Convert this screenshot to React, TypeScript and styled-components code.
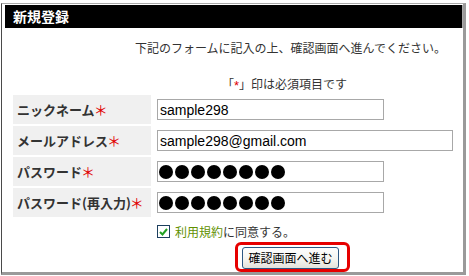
import React from "react";
import styled, { createGlobalStyle } from "styled-components";

const GlobalStyle = createGlobalStyle`
  html, body {
    margin: 0;
    padding: 0;
    background: #fff;
  }
  body {
    font-family: "Noto Sans CJK JP", "Liberation Sans", sans-serif;
    color: #333;
  }
`;

const Frame = styled.div`
  margin: 3px 0 0 1px;
  width: 461px;
  height: 268px;
  border-top: 1px solid #aaa;
  border-left: 1px solid #4a4a4a;
  border-right: 3px solid #9a9a9a;
  border-bottom: 3px solid #9a9a9a;
  overflow: hidden;
`;

const Header = styled.h2`
  margin: 1px 0 0 3px;
  height: 23px;
  line-height: 23px;
  padding-left: 8px;
  background: #000;
  border-right: 1px solid #aaa;
  color: #fff;
  font-size: 14px;
  font-weight: bold;
`;

const Intro = styled.p`
  margin: 12px 0 0;
  padding-right: 17px;
  text-align: right;
  font-size: 12px;
  line-height: 16px;
`;

const Note = styled.p`
  margin: 20px 0 0;
  padding-left: 220px;
  font-size: 12px;
  line-height: 16px;
`;

const NoteMark = styled.span`
  color: #e00000;
  font-family: "Liberation Sans", sans-serif;
  font-size: 13px;
  position: relative;
  top: 1px;
`;

const LabelMark = styled.span`
  color: #e00000;
  font-family: "Noto Sans CJK JP", sans-serif;
  font-size: 14px;
  font-weight: normal;
  margin-left: -1px;
  position: relative;
  top: -1px;
`;

const FormGrid = styled.div`
  margin: 2px 0 0 11px;
  display: grid;
  grid-template-columns: 138px 1fr;
  grid-auto-rows: 29px;
  column-gap: 6px;
  row-gap: 2px;
`;

const Label = styled.div`
  display: flex;
  align-items: center;
  padding-left: 4px;
  background: #f0f0f0;
  font-size: 13px;
  font-weight: bold;
  color: #333;
`;

const Field = styled.div`
  display: flex;
  align-items: center;
`;

const InputBox = styled.div<{ $width: number }>`
  box-sizing: border-box;
  width: ${(p) => p.$width}px;
  height: 21px;
  border: 1px solid #a8a8a8;
  padding-left: 2px;
  display: flex;
  align-items: center;
  font-family: "Liberation Sans", sans-serif;
  font-size: 14px;
  color: #000;
`;

const Dots = styled.div`
  display: flex;
  gap: 2px;
  margin-left: -1px;
`;

const Dot = styled.span`
  width: 14px;
  height: 14px;
  border-radius: 50%;
  background: #000;
`;

const Agree = styled.label`
  margin: 8px 0 0 155px;
  display: flex;
  align-items: center;
  gap: 5px;
  height: 13px;
  font-size: 12px;
  color: #333;
`;

const Check = styled.span`
  box-sizing: border-box;
  width: 13px;
  height: 13px;
  border: 1px solid #1d3f5e;
  background: #fff;
  display: flex;
  align-items: center;
  justify-content: center;
`;

const TermsLink = styled.span`
  color: #5f9000;
`;

const Highlight = styled.div`
  margin: 4px 0 0 233px;
  width: 105px;
  padding: 2px 0 0 4px;
  border: 3px solid #e60000;
  border-radius: 6px;
`;

const Submit = styled.button`
  box-sizing: border-box;
  display: block;
  width: 97px;
  height: 22px;
  padding: 0;
  border: 1px solid #2c5783;
  border-radius: 3px;
  background: linear-gradient(#fefefe, #f3f3ef 60%, #e3e2da);
  font-family: "Noto Sans CJK JP", sans-serif;
  font-size: 12px;
  line-height: 20px;
  color: #000;
`;

const rows = [
  { label: "ニックネーム", width: 227, value: "sample298" },
  { label: "メールアドレス", width: 296, value: "sample298@gmail.com" },
  { label: "パスワード", width: 227, secret: 8 },
  { label: "パスワード(再入力)", width: 227, secret: 8 },
];

export default function App() {
  return (
    <>
      <GlobalStyle />
      <Frame>
        <Header>新規登録</Header>
        <Intro>下記のフォームに記入の上、確認画面へ進んでください。</Intro>
        <Note>
          「<NoteMark>*</NoteMark>」印は必須項目です
        </Note>
        <FormGrid>
          {rows.map((r) => (
            <React.Fragment key={r.label}>
              <Label>
                {r.label}
                <LabelMark>＊</LabelMark>
              </Label>
              <Field>
                <InputBox $width={r.width}>
                  {r.secret ? (
                    <Dots>
                      {Array.from({ length: r.secret }).map((_, i) => (
                        <Dot key={i} />
                      ))}
                    </Dots>
                  ) : (
                    r.value
                  )}
                </InputBox>
              </Field>
            </React.Fragment>
          ))}
        </FormGrid>
        <Agree>
          <Check>
            <svg width="9" height="8" viewBox="0 0 9 8">
              <path d="M1 4 L3.5 6.5 L8 1" fill="none" stroke="#22a022" strokeWidth="2" />
            </svg>
          </Check>
          <span>
            <TermsLink>利用規約</TermsLink>に同意する。
          </span>
        </Agree>
        <Highlight>
          <Submit type="button">確認画面へ進む</Submit>
        </Highlight>
      </Frame>
    </>
  );
}
